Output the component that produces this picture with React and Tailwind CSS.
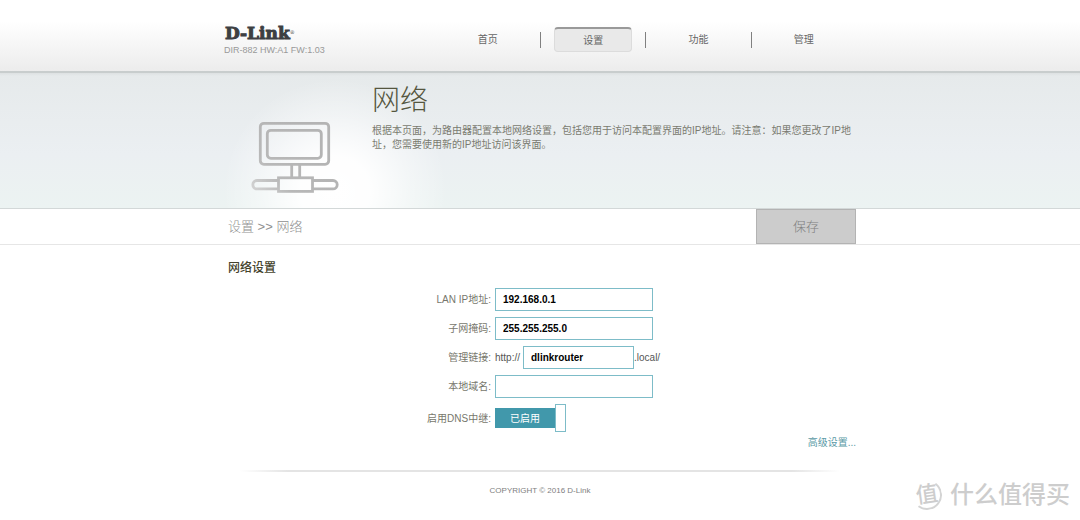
import React, { useState } from 'react';

const NAV_ITEMS = ['首页', '设置', '功能', '管理'];

const inputClass =
    'h-[23px] border border-[#7dbcc8] bg-white px-[7px] text-[10px] font-bold text-black focus:outline-none focus:border-[#2f8ea3]';

function NetworkIcon() {
    return (
        <svg width="88" height="73" viewBox="0 0 88 73" fill="none" strokeWidth="2.8" aria-hidden="true">
            <defs>
                <linearGradient id="wire" x1="0" y1="73" x2="60" y2="20" gradientUnits="userSpaceOnUse">
                    <stop offset="0" stopColor="#d6d6d6" />
                    <stop offset="0.4" stopColor="#b8b8b8" />
                    <stop offset="1" stopColor="#b4b4b4" />
                </linearGradient>
            </defs>
            <g stroke="url(#wire)">
                <rect x="9.3" y="2.3" width="68.4" height="41" rx="3.5" />
                <rect x="16.3" y="9.3" width="54" height="28" rx="3.5" />
                <path d="M40.7 43.5v13M48.7 43.5v13" />
                <rect x="27.5" y="56.8" width="34" height="13.6" />
                <path d="M27.5 59.5H6a4.2 4.2 0 0 0 0 8.4h21.5" />
                <path d="M61.5 59.5H82a4.2 4.2 0 0 1 0 8.4H61.5" />
            </g>
        </svg>
    );
}

function Header() {
    return (
        <header className="border-b-2 border-[#c8cdcd] bg-linear-to-b from-white from-30% to-[#ececec]">
            <div className="mx-auto flex h-[71px] max-w-[632px] items-start justify-between">
                <div className="pt-6">
                    <div className="flex h-5 items-center pl-px font-['DejaVu_Serif',serif] text-[17px] font-bold text-[#3d3f42] [-webkit-text-stroke:1px_#3d3f42]">
                        D-Link<sup className="text-[5px] font-normal [-webkit-text-stroke:0]">®</sup>
                    </div>
                    <p className="text-[9px] leading-3 text-[#999]">DIR-882 HW:A1 FW:1.03</p>
                </div>
                <nav className="grid w-2/3 grid-cols-4 pt-[27px]">
                    {NAV_ITEMS.map((item, i) => (
                        <div key={item} className="flex items-center">
                            <span className={i === 0 ? 'w-px' : 'h-4 w-px bg-[#808080]'} />
                            <a
                                href="#"
                                className={
                                    item === '设置'
                                        ? 'mx-auto flex h-[25px] w-[78px] items-center justify-center rounded border border-t-2 border-[#dcdcdc] border-t-[#999] bg-[#e9e9e9] text-[10px] text-[#666]'
                                        : 'mx-auto flex h-[25px] w-[78px] items-center justify-center text-[10px] text-[#666]'
                                }
                            >
                                {item}
                            </a>
                        </div>
                    ))}
                </nav>
            </div>
        </header>
    );
}

function Banner() {
    return (
        <section className="border-b border-[#d3d8d8] bg-[radial-gradient(circle_at_calc(50%-205px)_118px,#ffffff_0px,#ffffffee_35px,#ffffff66_75px,#ffffff00_112px),linear-gradient(#dde1e2,#e6eaeb_3px,#ebeff2_60%,#ecf3f2)]">
            <div className="mx-auto flex h-[135px] max-w-[632px]">
                <div className="w-[148px] shrink-0 pt-12 pl-[27px]">
                    <NetworkIcon />
                </div>
                <div className="pt-[9px]">
                    <h1 className="text-[28px] leading-[38px] font-light text-[#55563f]">网络</h1>
                    <p className="pt-1 text-[10px] leading-[14px] text-[#7a7b70]">
                        根据本页面，为路由器配置本地网络设置，包括您用于访问本配置界面的IP地址。请注意：如果您更改了IP地址，您需要使用新的IP地址访问该界面。
                    </p>
                </div>
            </div>
        </section>
    );
}

function Row({ id, label, children }) {
    return (
        <div className="grid grid-cols-[267px_1fr] items-center gap-1">
            <label htmlFor={id} className="text-right text-[#77776c]">{label}</label>
            <div className="flex items-center">{children}</div>
        </div>
    );
}

export default function App() {
    const [form, setForm] = useState({
        ip: '192.168.0.1',
        mask: '255.255.255.0',
        link: 'dlinkrouter',
        domain: '',
        relay: true
    });

    const update = (key) => (e) => setForm({ ...form, [key]: e.target.value });

    return (
        <div className="relative min-h-screen bg-white font-['Liberation_Sans','Noto_Sans_CJK_SC',sans-serif] text-[10px]">
            <Header />
            <Banner />

            {/* Breadcrumb and save */}
            <div className="border-b border-[#e6e6e6]">
                <div className="mx-auto flex h-[35px] max-w-[632px] items-center justify-between pl-1">
                    <p className="text-[13px] font-light text-[#8f8f8f]">设置 &gt;&gt; 网络</p>
                    <button
                        type="button"
                        disabled
                        className="h-full w-[100px] border border-[#b3b3b3] bg-[#ccc] text-[13px] font-light text-[#7f7f7f]"
                    >
                        保存
                    </button>
                </div>
            </div>

            <main className="mx-auto max-w-[632px] pt-[14px]">
                <h2 className="pl-1 text-[12px] leading-[18px] font-medium text-[#45432c]">网络设置</h2>

                <form className="flex flex-col gap-[6px] pt-[11px]" onSubmit={e => e.preventDefault()}>
                    <Row id="ip" label="LAN IP地址:">
                        <input id="ip" type="text" value={form.ip} onChange={update('ip')} className={`${inputClass} w-[158px]`} />
                    </Row>
                    <Row id="mask" label="子网掩码:">
                        <input id="mask" type="text" value={form.mask} onChange={update('mask')} className={`${inputClass} w-[158px]`} />
                    </Row>
                    <Row id="link" label="管理链接:">
                        <span className="pr-[3px] text-[#555]">http://</span>
                        <input id="link" type="text" value={form.link} onChange={update('link')} className={`${inputClass} w-[111px]`} />
                        <span className="text-[#555]">.local/</span>
                    </Row>
                    <Row id="domain" label="本地域名:">
                        <input id="domain" type="text" value={form.domain} onChange={update('domain')} className={`${inputClass} w-[158px]`} />
                    </Row>
                    <Row id="relay" label="启用DNS中继:">
                        <label className="relative flex cursor-pointer items-center">
                            <input
                                id="relay"
                                type="checkbox"
                                checked={form.relay}
                                onChange={e => setForm({ ...form, relay: e.target.checked })}
                                className="sr-only"
                            />
                            <span className={form.relay ? 'flex h-5 w-[60px] items-center justify-center bg-[#4198ab] text-white' : 'flex h-5 w-[60px] items-center justify-center bg-[#999] text-white'}>
                                {form.relay ? '已启用' : '已禁用'}
                            </span>
                            <span className="h-7 w-[11px] border border-[#7dbcc8] bg-white" />
                        </label>
                    </Row>
                </form>

                <div className="flex justify-end pt-1">
                    <a href="#" className="leading-[14px] text-[#5b9aa6]">高级设置...</a>
                </div>
            </main>

            <footer className="mx-auto max-w-[632px] pt-5 text-center">
                <div className="mx-4 h-[2px] bg-[linear-gradient(to_right,transparent,#e4e4e4_8%,#e4e4e4_92%,transparent)]" />
                <p className="pt-[13px] text-[8px] leading-3 text-[#808080]">COPYRIGHT © 2016 D-Link</p>
            </footer>

            {/* Watermark */}
            <div className="absolute right-[10px] bottom-2 flex items-center gap-2 text-[#cdcdcd]">
                <span className="flex size-[30px] rotate-[-8deg] items-center justify-center rounded-full border-2 border-[#d4d4d4] border-t-transparent border-l-transparent text-[22px] leading-none font-medium">
                    值
                </span>
                <span className="text-[24px] leading-[34px] font-medium">什么值得买</span>
            </div>
        </div>
    );
}
